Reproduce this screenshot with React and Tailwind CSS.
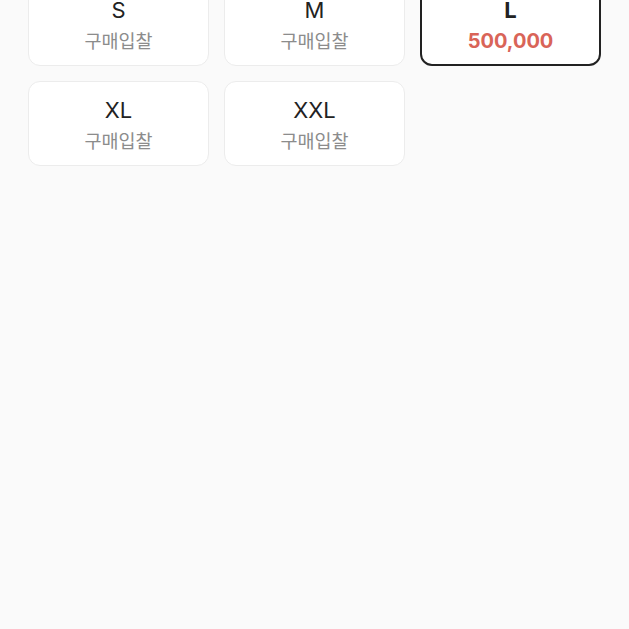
import React from 'react';

const sizes = [
  { size: 'S', price: null },
  { size: 'M', price: null },
  { size: 'L', price: '500,000', selected: true },
  { size: 'XL', price: null },
  { size: 'XXL', price: null },
];

const SizeCard = ({ size, price, selected }) => (
  <button
    type="button"
    className={
      'h-[85px] rounded-[12px] flex flex-col items-center justify-center pt-[3px] bg-white ' +
      (selected ? 'border-2 border-[#222222]' : 'border border-[#ececec]')
    }
  >
    <span className={'text-[22px] leading-[28px] text-[#222222] ' + (selected ? 'font-bold' : 'font-normal')}>
      {size}
    </span>
    <span
      className={
        'mt-[4px] leading-[26px] ' +
        (price ? 'text-[20px] font-bold text-[#d96458]' : 'text-[18.5px] text-[#8c8c8c]')
      }
    >
      {price || '구매입찰'}
    </span>
  </button>
);

export default function App() {
  return (
    <div
      className="h-[629px] overflow-hidden bg-[#fafafa] px-[28px]"
      style={{ fontFamily: 'Inter, "Noto Sans CJK KR", sans-serif' }}
    >
      <div className="-mt-[19px] grid grid-cols-3 gap-[15px]">
        {sizes.map((s) => (
          <SizeCard key={s.size} {...s} />
        ))}
      </div>
    </div>
  );
}
